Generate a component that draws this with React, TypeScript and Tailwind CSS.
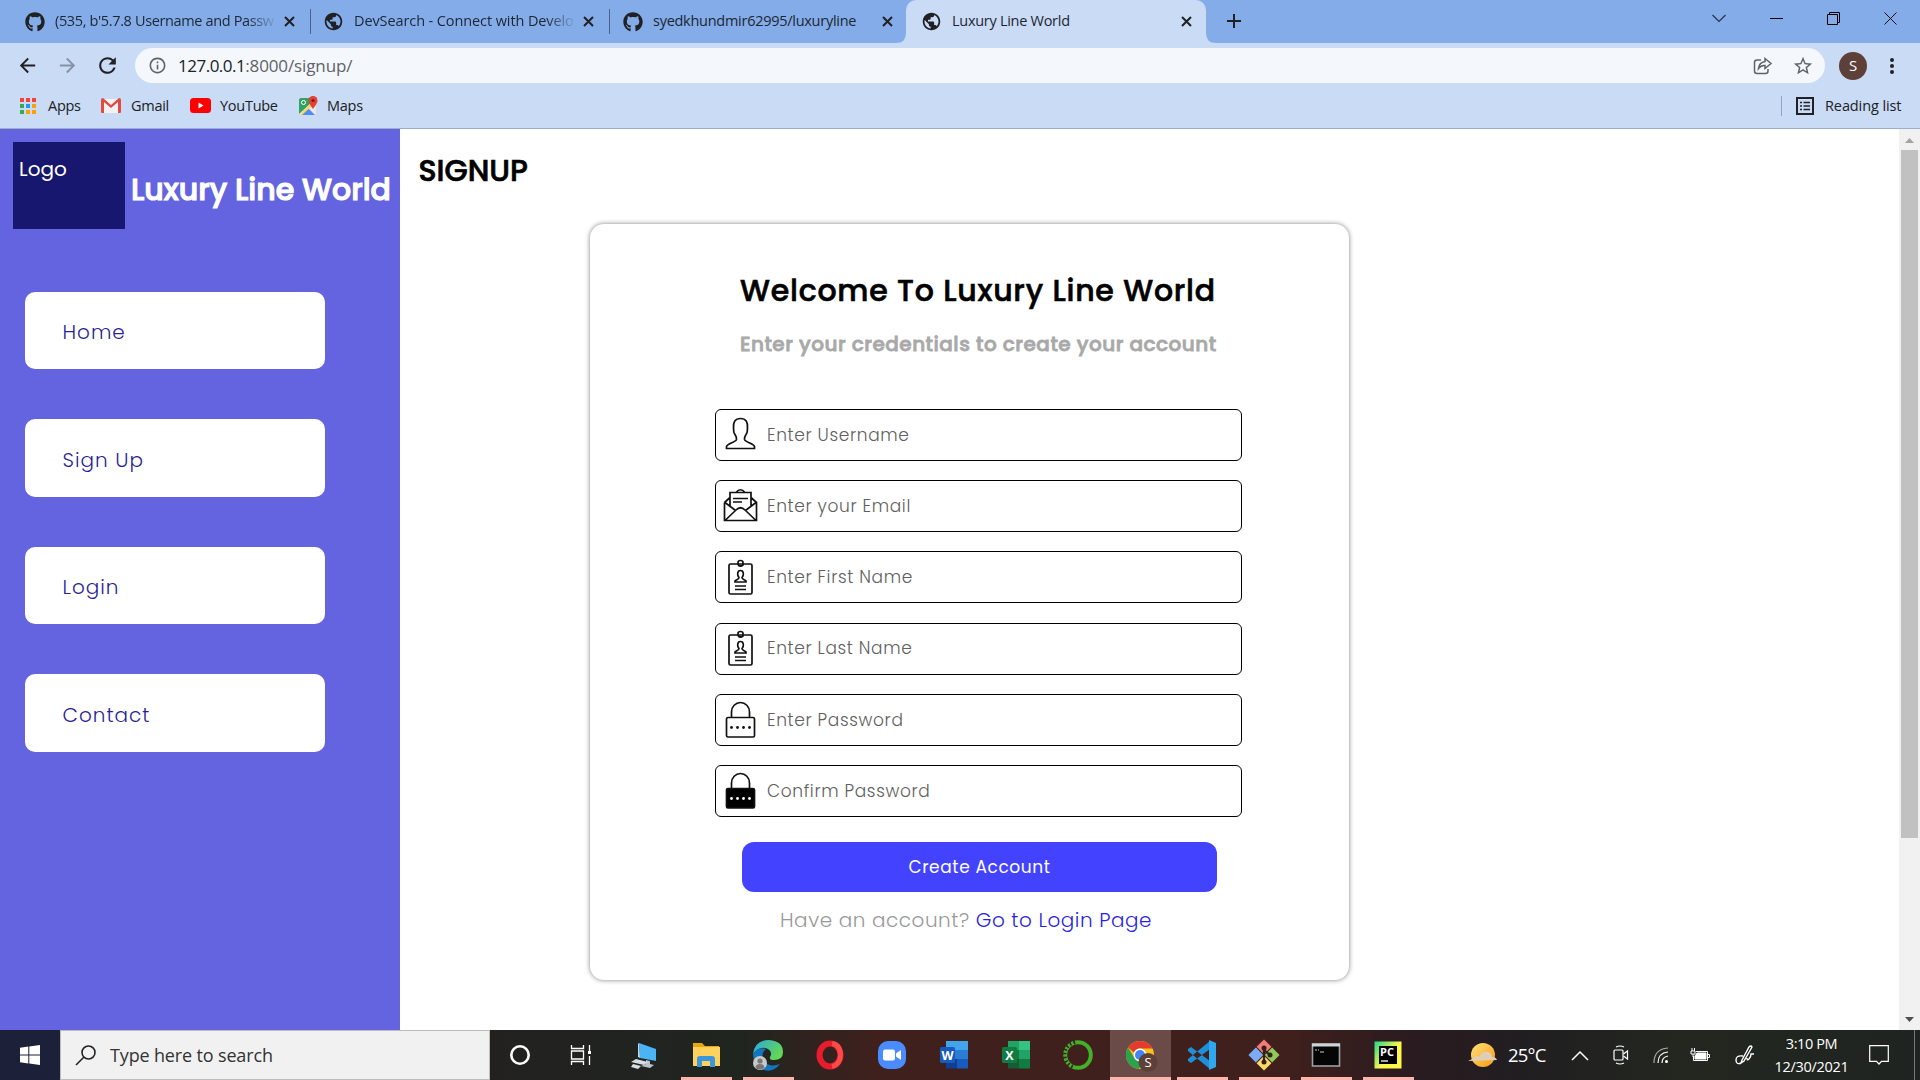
import React from "react";
import { FaGithub } from "react-icons/fa";
import { MdPublic, MdArrowBack, MdArrowForward, MdRefresh, MdInfoOutline, MdStarBorder } from "react-icons/md";

const CloseX = () => (
  <svg width="11" height="11" viewBox="0 0 11 11" stroke="#202124" strokeWidth="2" className="shrink-0">
    <path d="M1 1 10 10M10 1 1 10" />
  </svg>
);

interface TabProps {
  icon: React.ReactNode;
  title: string;
  cls: string;
  text: string;
}

function Tab({ icon, title, cls, text }: TabProps) {
  return (
    <div className={"flex h-[43px] shrink-0 items-center " + cls}>
      <span className="shrink-0">{icon}</span>
      <div className={"ml-[10px] h-[42px] shrink-0 whitespace-nowrap text-[14.5px] leading-[39px] text-[#1d2633] " + text}>{title}</div>
      <CloseX />
    </div>
  );
}

const GoogleApps = () => (
  <svg width="16" height="16" viewBox="0 0 16 16">
    <path d="M0 0h4v4H0zM6 0h4v4H6zM12 0h4v4h-4z" fill="#f44336" />
    <path d="M0 6h4v4H0zM0 12h4v4H0z" fill="#34a853" />
    <path d="M6 6h4v4H6z" fill="#2196f3" />
    <path d="M12 6h4v4h-4zM6 12h4v4H6zM12 12h4v4h-4z" fill="#ffa000" />
  </svg>
);

function Browser() {
  return (
    <header className="h-[129px] border-b border-[#9dadcb] bg-[#cadbf5] text-[#202124]">
      <div className="flex h-[43px] bg-[#84ace8]">
        <Tab cls="w-[310px] pl-[25px]" text="w-[229px] tracking-[-0.36px] [mask-image:linear-gradient(to_right,black_84%,transparent_97%)]" icon={<FaGithub size={20} />} title="(535, b'5.7.8 Username and Passw" />
        <div className="mt-[9px] h-[25px] w-px bg-[#4c648c]" />
        <Tab cls="w-[298px] pl-[12px]" text="w-[229px] tracking-[-0.1px] [mask-image:linear-gradient(to_right,black_84%,transparent_97%)]" icon={<MdPublic size={21} />} title="DevSearch - Connect with Develo" />
        <div className="mt-[9px] h-[25px] w-px bg-[#4c648c]" />
        <Tab cls="w-[296px] pl-[13px]" text="w-[229px] tracking-[-0.27px]" icon={<FaGithub size={20} />} title="syedkhundmir62995/luxuryline" />
        <Tab cls="w-[300px] rounded-t-[10px] bg-[#cadbf5] pl-[15px]" text="w-[229px] tracking-[-0.28px]" icon={<MdPublic size={21} />} title="Luxury Line World" />
        <svg width="10" height="10" viewBox="0 0 10 10" className="-ml-[310px] mt-auto mr-[300px] shrink-0" fill="#cadbf5"><path d="M10 0v10H0Q10 10 10 0" /></svg>
        <svg width="10" height="10" viewBox="0 0 10 10" className="mt-auto shrink-0" fill="#cadbf5"><path d="M0 0v10h10Q0 10 0 0" /></svg>
        <svg width="16" height="16" viewBox="0 0 16 16" stroke="#202124" strokeWidth="2" className="ml-[9.5px] mt-[13px] shrink-0"><path d="M8 1v14M1 8h14" /></svg>
        <div className="ml-auto flex items-center gap-[44px] pb-[6px] pr-[23px]">
          <svg width="14" height="9" viewBox="0 0 14 9" fill="none" stroke="#23324a" strokeWidth="1.2"><path d="M.5 1 7 7.5 13.500 1" /></svg>
          <div className="h-px w-[13px] bg-black" />
          <svg width="13" height="13" viewBox="0 0 13 13" fill="none" stroke="#000"><path d="M.5 2.500h10v10H.5zM2.500 2.500V.5h10v10h-2" /></svg>
          <svg width="13" height="13" viewBox="0 0 13 13" stroke="#111"><path d="M.5.5 12.500 12.500M12.500.5.5 12.500" /></svg>
        </div>
      </div>
      <div className="flex h-[45px] items-center pl-[16px]">
        <MdArrowBack size={23} /><MdArrowForward size={23} className="ml-[17px] text-[#8591a8]" /><MdRefresh size={25} className="ml-[16px]" />
        <div className="ml-[15px] flex h-[35px] w-[1690px] items-center rounded-full bg-[#f4f7fc] pl-[13px] pr-[11px]">
          <MdInfoOutline size={19} className="text-[#5f6368]" />
          <div className="ml-[11px] text-[17px] leading-[35px]"><span className="tracking-[-0.5px]">127.0.0.1</span><span className="tracking-[-0.12px] text-[#5f6368]">:8000/signup/</span></div>
          <svg width="20" height="18" viewBox="0 0 20 18" fill="none" stroke="#5f6368" strokeWidth="1.5" className="ml-auto mr-[19px]"><path d="M8 3H4Q1.500 3 1.500 5.500V14q0 2.500 2.500 2.500h8.500Q15 16.500 15 14v-2M12 1.500 18 6.500l-6 5V8.500Q8 8 5.500 11.500 6 5.500 12 4.500z" /></svg>
          <MdStarBorder size={22} className="text-[#5f6368]" />
        </div>
        <div className="ml-[14px] flex size-[28px] items-center justify-center rounded-full bg-[#5d4037] text-[15px] text-white">S</div>
        <div className="ml-[23px] flex flex-col gap-[2px]"><i className="size-1 rounded-full bg-[#202124]" /><i className="size-1 rounded-full bg-[#202124]" /><i className="size-1 rounded-full bg-[#202124]" /></div>
      </div>
      <div className="flex h-[35px] items-center pl-[20px] text-[14.5px] tracking-[-0.27px]">
        <GoogleApps /><span className="ml-[12px] w-[33px]">Apps</span>
        <svg width="20" height="15" viewBox="0 0 20 15" className="ml-[20px]"><path d="M2 1h16v14H2z" fill="#f2f2f2" /><path d="M0 2v12q0 1 1 1h2V4l7 6 7-6v11h2q1 0 1-1V2q0-2-2-2L10 7 2 0Q0 0 0 2" fill="#e04a3f" /></svg>
        <span className="ml-[10px] w-[39px]">Gmail</span>
        <svg width="21" height="15" viewBox="0 0 21 15" className="ml-[20px]"><rect width="21" height="15" rx="3.500" fill="#f00" /><path d="M8.500 4.500v6l5-3z" fill="#fff" /></svg>
        <span className="ml-[9px] w-[58px]">YouTube</span>
        <svg width="20" height="19" viewBox="0 0 20 19" className="ml-[21px]"><rect y="2" width="17" height="17" rx="2" fill="#e8e8e8" /><path d="M0 4q0-2 2-2h10v5L0 18z" fill="#34a265" /><path d="M2 19 9 12l7 7z" fill="#4d8df6" /><path d="M1 18 12 7l2 2-11 10z" fill="#fdd663" /><path d="M14 13Q9.500 7 9.500 4.500a4.500 4.500 0 0 1 9 0Q18.500 7 14 13" fill="#e34133" /><circle cx="14" cy="4.500" r="1.600" fill="#7b1c15" /><circle cx="4.500" cy="6.500" r="2" fill="none" stroke="#fff" /></svg>
        <span className="ml-[8px]">Maps</span>
        <div className="ml-auto mr-[14px] h-[20px] w-px bg-[#93a5c6]" />
        <svg width="18" height="18" viewBox="0 0 18 18" fill="none" stroke="#202124" strokeWidth="2"><path d="M1 1h16v16H1z" /><path d="M4 5.500h2M4 9h2M4 12.500h2M7.500 5.500H14M7.500 9H14M7.500 12.500H14" strokeWidth="1.700" /></svg>
        <span className="ml-[11px] mr-[18px] w-[77px] whitespace-nowrap tracking-[-0.1px]">Reading list</span>
      </div>
    </header>
  );
}

const UserIcon = () => <path d="M6.500 33.500v-2c1-3.500 9-4 10-7 .5-2-.5-3.500-1.500-5-2-2.500-1-4-1.500-6C13 7 15 3.500 20.500 3.500S28 7 27.500 13.500c-.5 2 .5 3.500-1.500 6-1 1.500-2 3-1.500 5 1 3 9 3.500 10 7v2z" />;
const MailIcon = () => <path d="M10 14.500V6.500h21V20M10 14.500V20M5 16.500 15.500 24.500M36 16.500 25.500 24.500M4.500 16.500v18h32v-18L31 11.500M4.500 16.500 10 11.500M5 34.500 16 24q4.500-4.500 9 0L36 34.500M13 12.500h15M13 16h9M16 6.500Q20.500 1 25 6.500" />;
const BadgeIcon = () => <><rect x="9" y="7" width="23" height="30" rx="1.500" /><path d="M18 8V5.500Q18 3.500 20.500 3.500T23 5.500V8Q20.500 10 18 8M15 25v-1c1-1.500 4-1.500 4-3.500-2-2-2-7 1.500-7s3.500 5 1.500 7c0 2 3 2 4 3.500v1zM15 29h11M15 32.500h11" /></>;
const LockIcon = ({ fill }: { fill?: boolean }) => (
  <>
    <path d="M11.500 18V13a9 9.500 0 0 1 18 0v5" />
    <rect x="6.500" y="18.500" width="28" height="19.500" rx="1.500" fill={fill ? "#000" : "none"} />
    {[11.5, 17.5, 23.5, 29.5].map((x) => <circle key={x} cx={x} cy="28.500" r="1.400" fill={fill ? "#fff" : "#111"} stroke="none" />)}
  </>
);

const fields = [
  { icon: <UserIcon />, label: "Enter Username" },
  { icon: <MailIcon />, label: "Enter your Email" },
  { icon: <BadgeIcon />, label: "Enter First Name" },
  { icon: <BadgeIcon />, label: "Enter Last Name" },
  { icon: <LockIcon />, label: "Enter Password" },
  { icon: <LockIcon fill />, label: "Confirm Password" },
];
const nav = ["Home", "Sign Up", "Login", "Contact"];

function Page() {
  return (
    <div className="flex h-[901px] bg-white font-[Poppins,Inter,sans-serif]">
      <aside className="w-[400px] shrink-0 bg-[#6464e0] pt-[13px]">
        <div className="flex pl-[13px]">
          <div className="h-[87px] w-[112px] shrink-0 bg-[#18176f] pl-[6px] pt-[12px] text-[20px] leading-[30px] text-white">Logo</div>
          <h1 className="ml-[6px] mt-[25px] whitespace-nowrap text-[30px] font-medium leading-[45px] text-white [-webkit-text-stroke:1.1px_#fff]">Luxury Line World</h1>
        </div>
        <nav className="mt-[62.8px] flex flex-col gap-[50px] pl-[25px]">
          {nav.map((n) => (
            <a key={n} className="flex h-[77.5px] w-[300px] items-center rounded-[10px] bg-white pl-[37.5px] pt-[3px] text-[20px] font-light tracking-[1px] text-[#2c1f96]">{n}</a>
          ))}
        </nav>
      </aside>
      <main className="flex-1">
        <h2 className="mt-[19px] pl-[18.5px] text-[30px] font-medium leading-[45px] text-black [-webkit-text-stroke:0.7px_#000]">SIGNUP</h2>
        <section className="ml-[190px] mt-[31px] h-[756px] w-[759px] rounded-[14px] bg-white pt-[44px] shadow-[0_0_5px_#808080]">
          <h2 className="pl-[150px] text-[30px] font-medium leading-[45px] tracking-[0.75px] text-black [-webkit-text-stroke:0.6px_#000]">Welcome To Luxury Line World</h2>
          <p className="mt-[16px] pl-[150px] text-[20px] font-medium leading-[30px] tracking-[0.49px] text-[#a9a9a9] [-webkit-text-stroke:0.8px_#a9a9a9]">Enter your credentials to create your account</p>
          <form className="mt-[50px] flex flex-col gap-[19.2px] pl-[125px]">
            {fields.map((f) => (
              <div key={f.label} className="flex h-[52px] w-[527px] items-center rounded-[6px] border border-black pl-[4px] text-[17px] font-light tracking-[0.64px] text-[#606060]">
                <svg width="41" height="41" viewBox="0 0 41 41" fill="none" stroke="#111" strokeWidth="1.700">{f.icon}</svg>
                <span className="ml-[6px] pt-px">{f.label}</span>
              </div>
            ))}
          </form>
          <button className="ml-[152px] mt-[25px] flex h-[50px] w-[475px] items-center justify-center rounded-[12px] bg-[#4343ff] pt-[1.5px] text-[17px] tracking-[0.6px] text-white">Create Account</button>
          <p className="mt-[13px] pl-[190px] text-[20px] font-light leading-[30px] tracking-[0.54px] text-[#999]">Have an account? <a className="text-[#2b1fe0]">Go to Login Page</a></p>
        </section>
      </main>
      <div className="flex w-[21px] flex-col items-center bg-[#f1f1f1]">
        <svg width="21" height="21"><path d="M6 14h9l-4.500-5z" fill="#a3a3a3" /></svg>
        <div className="h-[688px] w-[17px] bg-[#c1c1c1]" />
        <svg width="21" height="21" className="mt-auto"><path d="M6 8h9l-4.500 5z" fill="#505050" /></svg>
      </div>
    </div>
  );
}

const I = ({ children }: { children: React.ReactNode }) => <svg width="34" height="34" viewBox="0 0 34 34">{children}</svg>;
const Office = ({ c, l, front }: { c: string[]; l: string; front: string }) => (
  <svg width="28" height="28" viewBox="0 0 28 28">
    {c.map((x, i) => <rect key={i} x={6 + (i % 2) * 11} y={Math.floor(i / 2) * 9} width="11" height="9.500" fill={x} />)}
    <rect y="6" width="15" height="16" rx="1.500" fill={front} />
    <text x="7.500" y="18.500" textAnchor="middle" fontSize="12.500" fontWeight="700" fill="#fff">{l}</text>
  </svg>
);

const apps: { node: React.ReactNode; open?: boolean; active?: boolean }[] = [
  { node: <I><circle cx="17" cy="17" r="8.700" fill="none" stroke="#fff" strokeWidth="2.600" /></I> },
  { node: <I><path d="M6.500 7v3.500h12V7M6.500 27v-3.500h12V27M6.500 13h12v8h-12zM24.500 7v6M24.500 18v9" fill="none" stroke="#fff" strokeWidth="1.300" /><path d="M23 13h3v3h-3z" fill="#fff" /></I> },
  { node: <I><path d="m12 5 17 6v12L13 20z" fill="#4ab4f5" /><path d="m12 5 1 15-2-1V6z" fill="#b9ddf0" /><path d="m19 22 4 1v3l4 1-4 3-9-2 5-2z" fill="#b8c3cb" /><path d="m9 21 12 3-4 3-13-3zM6 26l8 2-3 3-7-2z" fill="#d7dee3" /></I> },
  { node: <I><path d="M4 5h9l3 3h14v20H4z" fill="#e9a70a" /><path d="M4 9h27v19H4z" fill="#ffd25e" /><path d="M8 28v-7q0-3 3-3h12q3 0 3 3v8h-5v-6h-8v6H8z" fill="#3d96dc" /></I>, open: true },
  { node: <I><defs><linearGradient id="eg" x2="1" y2=".5"><stop stopColor="#2aa9e0" /><stop offset="1" stopColor="#62d854" /></linearGradient></defs><path d="M2 16Q4 2 18 2q14 1 14 12 0 8-9 8-5 0-4-3 3-5-2-8Q9 7 2 16" fill="url(#eg)" /><path d="M2 16q5-8 13-5-6 5-2 12 5 7 16 3-7 9-16 6Q2 28 2 16" fill="#1275bf" /><circle cx="9" cy="25" r="7" fill="#c9c9c9" /><circle cx="9" cy="23" r="2.600" fill="#777" /><path d="M4.500 30q0-4 4.500-4t4.500 4q-4 3-9 0" fill="#777" /></I>, open: true },
  { node: <I><ellipse cx="17" cy="17" rx="10.500" ry="11.500" fill="none" stroke="#e81c2c" strokeWidth="6" /><path d="M19 5.500q8 1 8.500 11.500Q27 27 19 28.500" fill="none" stroke="#ff4a4a" strokeWidth="5" /></I> },
  { node: <I><rect x="3" y="3" width="28" height="28" rx="10" fill="#4a8cff" /><rect x="8" y="11.500" width="12" height="11" rx="2" fill="#fff" /><path d="m21 15.500 5-3.500v10l-5-3.500z" fill="#fff" /></I> },
  { node: <Office l="W" front="#185abd" c={["#41a5ee", "#41a5ee", "#2b7cd3", "#2b7cd3", "#103f91", "#185abd"]} /> },
  { node: <Office l="X" front="#107c41" c={["#21a366", "#33c481", "#107c41", "#21a366", "#185c37", "#107c41"]} /> },
  { node: <I><circle cx="17" cy="17" r="12.800" fill="none" stroke="#43b02a" strokeWidth="4" /><path d="M14 4Q1 8 4 21q2 6 8 8" fill="none" stroke="#3a211d" strokeWidth="4" strokeDasharray="1.500 2.500" /></I> },
  { node: <I><circle cx="16" cy="17" r="14" fill="#fbc116" /><path d="M16 3A14 14 0 0 1 28.500 10.500H16A6.500 6.500 0 0 0 10 14.500L4 9.500A14 14 0 0 1 16 3" fill="#e33b2e" /><path d="M4 9.500 10.500 20q3 4 7.500 3.300L15 31A14 14 0 0 1 4 9.500" fill="#2ba24c" /><circle cx="16" cy="17" r="6.500" fill="#fff" /><circle cx="16" cy="17" r="5" fill="#4285f4" /><circle cx="24" cy="24.500" r="9.500" fill="#5d4037" /><text x="24" y="29" textAnchor="middle" fontSize="13" fill="#fff">S</text></I>, open: true, active: true },
  { node: <I><path d="m3 11 3-2 19 14v8L3 13zM3 23l3 2 19-14V3L3 21z" fill="#1f8fd8" /><path d="m24 2 7 3v24l-7 3z" fill="#2fa8ef" /></I>, open: true },
  { node: <I><g transform="rotate(45 17 17)"><rect x="6" y="6" width="10.500" height="10.500" fill="#f27c78" /><rect x="17.500" y="6" width="10.500" height="10.500" fill="#8fca5a" /><rect x="6" y="17.500" width="10.500" height="10.500" fill="#7cacf8" /><rect x="17.500" y="17.500" width="10.500" height="10.500" fill="#fbd968" /></g><path d="M17 8v18M17 12l6 5" stroke="#33211e" strokeWidth="2.200" /><circle cx="17" cy="10" r="2.500" fill="#33211e" /><circle cx="17" cy="24" r="2.500" fill="#33211e" /><circle cx="23" cy="17" r="2.500" fill="#33211e" /></I>, open: true },
  { node: <I><rect x="3.500" y="6" width="27" height="22" fill="#050505" stroke="#9aa0a4" strokeWidth="1.600" /><path d="M3 5.500h28v3H3z" fill="#cdd3d6" /><path d="M6 12h2m1 0h1m1 2h4" stroke="#ccc" /></I>, open: true },
  { node: <I><defs><linearGradient id="pg" x2=".6" y2=".5"><stop stopColor="#21d789" /><stop offset="1" stopColor="#fcf84a" /></linearGradient></defs><rect x="3.500" y="3.500" width="27" height="27" fill="url(#pg)" /><path d="M8 8h18v18H8z" /><text x="9" y="18" fontSize="11" fontWeight="700" fill="#fff">PC</text><path d="M10 23h7" stroke="#fff" strokeWidth="1.300" /></I>, open: true },
];

function Taskbar() {
  return (
    <footer className="flex h-[50px] bg-[linear-gradient(to_right,#222120_490px,#20251f_740px,#40201d_880px,#40201c_1280px,#291b20_1420px,#211e21_1520px,#23271f_1680px,#1f2422_1920px)] text-white">
      <div className="flex w-[60px] items-center justify-center bg-[#1c2038]">
        <svg width="20" height="20" viewBox="0 0 20 20" fill="#fff"><path d="M0 2.800 8.300 1.600V9.500H0zM9.300 1.400 20 0V9.500H9.300zM0 10.500h8.300v8L0 17.300zM9.300 10.500H20V20L9.300 18.600z" /></svg>
      </div>
      <div className="flex w-[430px] items-center border border-[#bcbcbc] bg-[#f1f1f1] pl-[14px] text-[18px] text-[#333]">
        <svg width="21" height="21" viewBox="0 0 21 21" fill="none" stroke="#222" strokeWidth="1.600"><circle cx="13.500" cy="7.500" r="6.500" /><path d="M9 12 1 20" /></svg>
        <span className="ml-[14px] tracking-[-0.15px]">Type here to search</span>
      </div>
      <div className="-ml-px flex">
        {apps.map((a, i) => (
          <div key={i} className="flex w-[62px] flex-col items-center">
            <div className={"flex h-[47px] items-center justify-center pt-[3px] " + (a.active ? "ml-px w-[61px] bg-[#6b4b47]" : "")}>{a.node}</div>
            {a.open && <div className={"h-[3px] bg-[#ffb5ab] " + (a.active ? "ml-px w-[61px]" : "w-[51px]")} />}
          </div>
        ))}
      </div>
      <div className="ml-auto flex items-center">
        <svg width="30" height="28" viewBox="0 0 30 28"><defs><linearGradient id="sun" x2="1" y2="1"><stop stopColor="#ffe17a" /><stop offset="1" stopColor="#f79a12" /></linearGradient></defs><circle cx="15" cy="14" r="12" fill="url(#sun)" /><path d="M0 20q3-1 5-3 3-3 6-1 3-6 9-5 4 1 4 5 4 0 5 3z" fill="#e0cdb8" /></svg>
        <span className="ml-[10px] w-[38px] text-[18.5px] tracking-[-0.8px]">25°C</span>
        <svg width="18" height="11" viewBox="0 0 18 11" fill="none" stroke="#fff" strokeWidth="1.500" className="ml-[25px]"><path d="m1 10 8-8 8 8" /></svg>
        <svg width="16" height="20" viewBox="0 0 16 20" fill="none" stroke="#fff" strokeWidth="1.200" className="ml-[24px]"><rect x="1" y="5" width="9" height="10" rx="1" /><path d="m10.500 9 4-3v8l-4-3M3 2q4-2 8 0M3 18q4 2 8 0" /></svg>
        <svg width="16" height="17" viewBox="0 0 16 17" fill="none" stroke="#fff" strokeWidth="1.200" className="ml-[24px]"><path d="M1 16Q1 2 15 1" opacity=".6" /><path d="M5 16Q5 6 15 5M9 16Q9 10 15 9" /><circle cx="13.500" cy="14.500" r="1.500" fill="#fff" stroke="none" /></svg>
        <svg width="20" height="14" viewBox="0 0 20 14" fill="none" stroke="#fff" className="ml-[21px]"><path d="M3.500 8v4.500h14v-9H6M17.500 6.500h2v3h-2" /><path d="M7 5h9v6H5V8z" fill="#fff" /><path d="M1 3h4v3H1zM2 3V0M4.500 3V0M3 6v3" /></svg>
        <svg width="20" height="20" viewBox="0 0 20 20" fill="none" stroke="#fff" strokeWidth="1.400" className="ml-[25px]"><path d="M7 15 14 2q2-2 3 0L9 16l-3 2zM8 11Q1 10 1 15t5 3M12 13q0 3 2 1t2-5h3" /></svg>
        <div className="ml-[19px] mr-px flex w-[75px] flex-col items-center text-[14.5px] leading-[23px]"><span className="tracking-[-0.4px]">3:10 PM</span><span className="tracking-[-0.3px]">12/30/2021</span></div>
        <svg width="20" height="20" viewBox="0 0 20 20" fill="none" stroke="#fff" strokeWidth="1.200" className="ml-[19px]"><path d="M.7.7h18.600v15.600H12.500L10 19 7.500 16.300H.7z" /></svg>
        <div className="ml-[25px] mr-[5px] h-[50px] w-px bg-[#777]" />
      </div>
    </footer>
  );
}

export default function App() {
  return (
    <div className="h-[1080px] w-[1920px] overflow-hidden font-['Segoe_UI','Open_Sans',sans-serif]">
      <Browser />
      <Page />
      <Taskbar />
    </div>
  );
}
